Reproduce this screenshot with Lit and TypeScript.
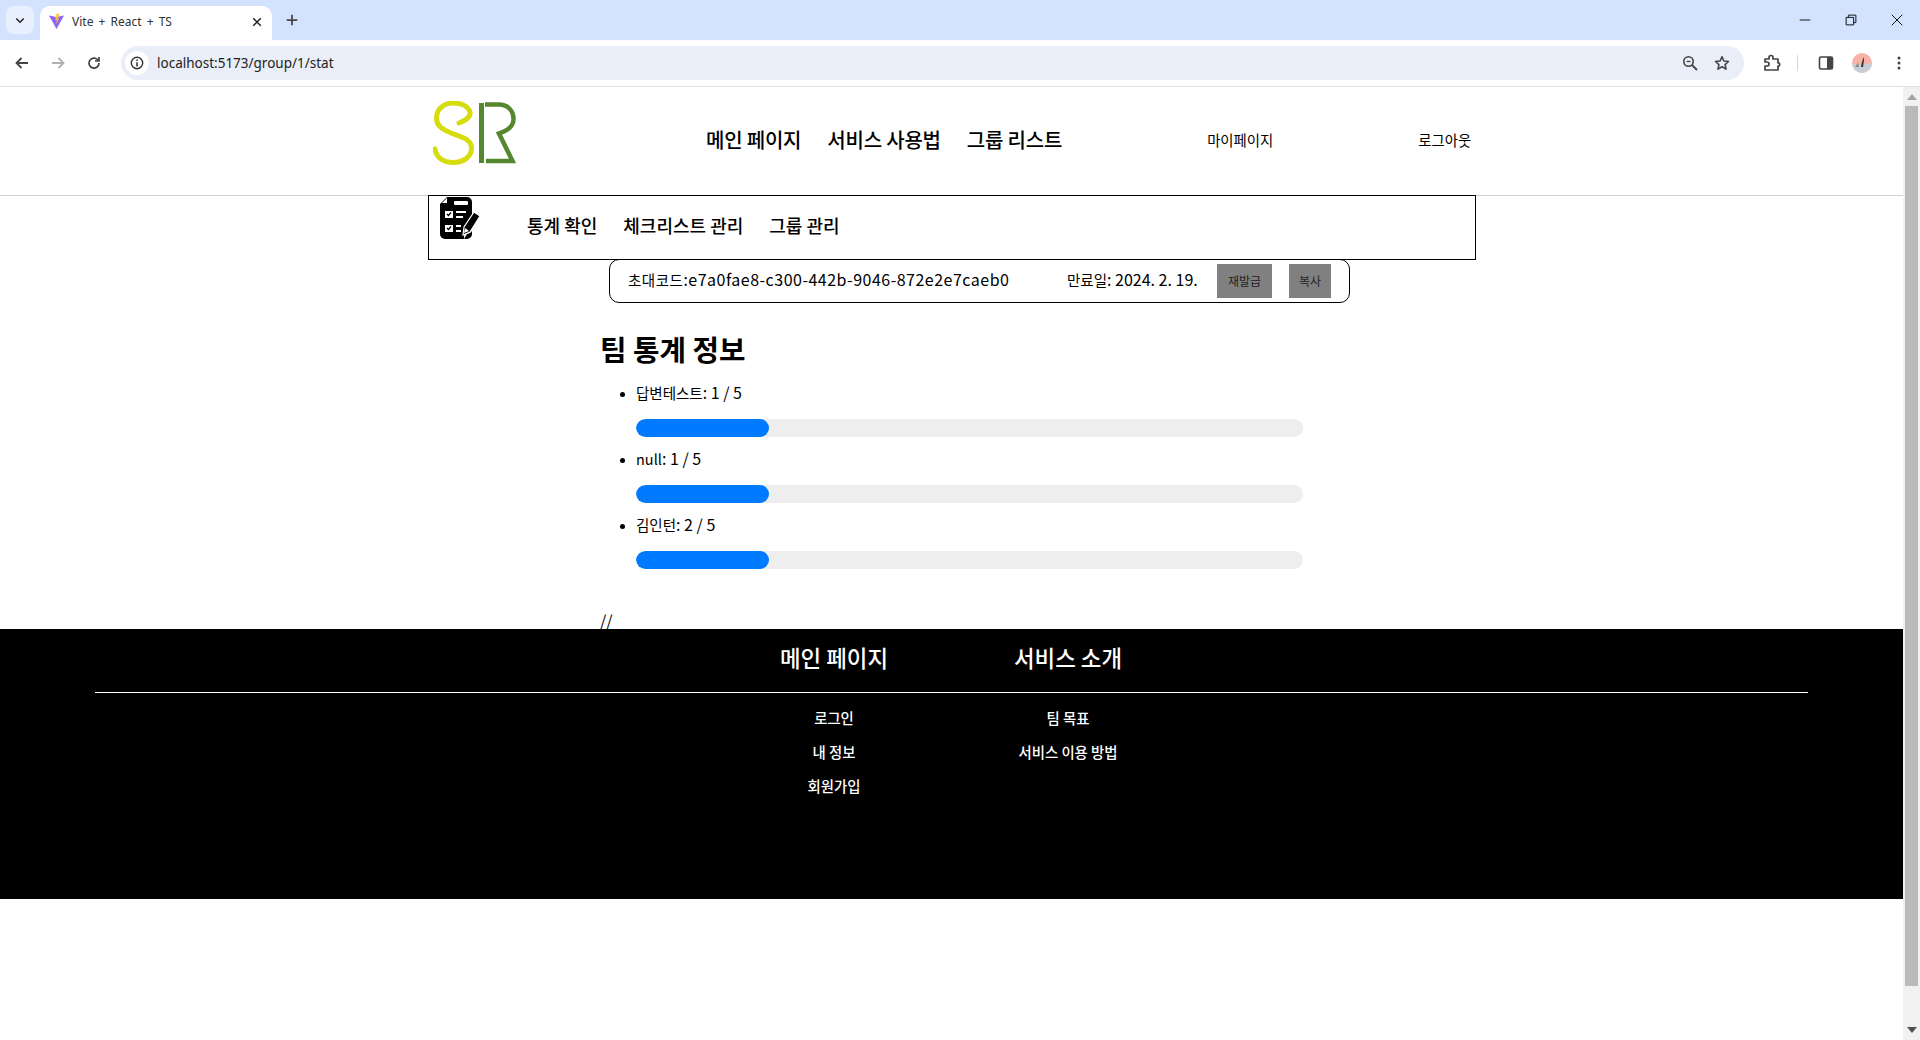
import { LitElement, html, css, svg } from "lit";
import { customElement } from "lit/decorators.js";

const ico = (w: number, h: number, body: unknown, vb = "0 0 16 16") =>
  html`<svg width=${w} height=${h} viewBox=${vb} fill="none">${body}</svg>`;

@customElement("app-root")
export class AppRoot extends LitElement {
  static styles = css`
    :host { display: block; width: 1920px; height: 1040px; overflow: hidden; background: #fff;
      font-family: "Noto Sans CJK KR", "Noto Sans", sans-serif; color: #000; }
    * { box-sizing: border-box; }
    svg { display: block; flex: none; }

    .tabstrip { height: 40px; background: #d3e3fd; display: flex; align-items: flex-end; padding-left: 6px; }
    .tabsearch { width: 28px; height: 28px; margin-bottom: 6px; border-radius: 8px; background: #e9f0fd; display: flex; align-items: center; justify-content: center; }
    .tab { margin-left: 6px; width: 232px; height: 34px; background: #fff; border-radius: 10px 10px 0 0; display: flex; align-items: center; padding: 0 9px 0 8px; font: 12px "Noto Sans", sans-serif; word-spacing: 2px; color: #333; }
    .tab .title { flex: 1; margin-left: 6px; padding-bottom: 3px; }
    .tab svg { margin-bottom: 2px; }
    .newtab { margin: 0 0 6px 6px; width: 28px; height: 28px; display: flex; align-items: center; justify-content: center; }
    .win { margin-left: auto; display: flex; height: 40px; align-items: center; }
    .win div { width: 46px; display: flex; justify-content: center; }

    .toolbar { height: 47px; background: #fff; border-bottom: 1px solid #e0e0e0; display: flex; align-items: center; padding: 0 4px 1px; }
    .nb { width: 36px; height: 34px; display: flex; align-items: center; justify-content: center; }
    .omni { width: 1623px; margin-left: 9px; height: 34px; border-radius: 17px; background: #e9eef8; display: flex; align-items: center; padding: 0 9px 0 4px; font: 13.5px "Noto Sans", sans-serif; color: #222; }
    .info { width: 24px; height: 24px; border-radius: 50%; background: #fff; display: flex; align-items: center; justify-content: center; margin-right: 8px; }
    .omni .url { flex: 1; }
    .omni .end { display: flex; gap: 16px; align-items: center; margin-right: 5px; }
    .tright { display: flex; align-items: center; margin-left: 19px; }
    .sep { width: 1px; height: 16px; background: #c7d9f7; margin: 0 20px 0 16px; }

    .viewport { height: 953px; display: flex; }
    .page { width: 1903px; height: 953px; overflow: hidden; }
    .scroll { width: 17px; background: #f1f1f1; display: flex; flex-direction: column; align-items: center; padding-top: 7px; }
    .thumb { width: 13px; height: 880px; background: #bababa; margin-top: 6px; }
    .arrow-d { margin-top: auto; margin-bottom: 7px; }

    header { height: 109px; border-bottom: 1px solid #d0d0d0; display: flex; align-items: center; padding-left: 433px; }
    .logo { margin-top: -17px; }
    .mainnav { display: flex; gap: 26px; margin-left: 189px; font-size: 20px; font-weight: 500; margin-top: -4px; letter-spacing: -0.2px; }
    .user { font-size: 14.4px; margin-top: -4px; font-weight: 400; }
    .u1 { margin-left: 145px; }
    .u2 { margin-left: 145px; }

    .sub { width: 1048px; height: 65px; margin: -1px 0 0 428px; border: 1px solid #000; display: flex; align-items: center; padding: 0 0 6px 11px; }
    .sub svg { margin-top: -14px; }
    .subnav { display: flex; gap: 26px; margin-left: 46px; font-size: 18px; font-weight: 500; }

    .invite { width: 741px; height: 44px; margin: -1px 0 0 609px; border: 1px solid #000; border-radius: 10px; display: flex; align-items: center; padding: 0 0 1px 18px; font-size: 16px; }
    .ko { font-size: 14.5px; }
    .code { width: 439px; letter-spacing: 0.5px; margin-top: -3px; }
    .exp { width: 150px; margin-top: -3px; }
    .btn { height: 34px; background: #808080; font-size: 12px; color: #222; display: flex; align-items: center; justify-content: center; }
    .b1 { width: 55px; }
    .b2 { width: 42px; margin-left: 17px; }

    .stats { margin-left: 600px; width: 680px; padding-top: 28px; }
    h2 { margin: 0; font-size: 28.8px; font-weight: 700; line-height: 36px; }
    ul { margin: 11px 0 0; padding-left: 36px; list-style: none; }
    li { height: 66px; font-size: 16px; line-height: 24px; padding-top: 2px; position: relative; }
    li::before { content: ""; position: absolute; left: -16px; top: 14px; width: 5px; height: 5px; border-radius: 50%; background: #000; }
    .track { width: 667px; height: 18px; border-radius: 9px; background: #eee; margin-top: 14px; overflow: hidden; }
    .fill { height: 18px; border-radius: 9px; background: #007bff; }
    .slash { height: 21px; margin-top: 32px; font-size: 16px; line-height: 24px; }

    footer { height: 270px; background: #000; color: #fff; padding-top: 10px; }
    .fhead { display: flex; height: 54px; margin: 0 95px; border-bottom: 1px solid #fff; }
    .col { width: 234px; text-align: center; }
    .c1 { margin-left: 622px; }
    .fhead .col { font-size: 22.4px; font-weight: 500; line-height: 37px; }
    .fbody { display: flex; margin: 0 95px; padding-top: 8px; }
    .fbody .col { font-size: 14.4px; font-weight: 500; line-height: 34px; }
  `;

  render() {
    const rows = [["답변테스트", "1 / 5"], ["null", "1 / 5"], ["김인턴", "2 / 5"]];
    return html`
      <div class="tabstrip">
        <div class="tabsearch">${ico(12, 12, svg`<path d="M3 6l5 5 5-5" stroke="#222" stroke-width="2"/>`)}</div>
        <div class="tab">
          ${ico(18, 18, svg`<path d="M1 2.5l7.5 13.5 7.5-13.5-4 .7-3.5 1-3.5-1z" fill="#8c65f5"/><path d="M8.5 1l3-.5-1.8 5 1.5-.5-3 6 .6-4.5-1.6.4z" fill="#ffc517"/>`, "0 0 18 18")}
          <span class="title">Vite + React + TS</span>
          ${ico(12, 12, svg`<path d="M3 3l10 10M13 3L3 13" stroke="#222" stroke-width="2"/>`)}
        </div>
        <div class="newtab">${ico(14, 14, svg`<path d="M8 2v12M2 8h12" stroke="#444" stroke-width="2"/>`)}</div>
        <div class="win">
          <div>${ico(12, 12, svg`<path d="M1 8h14" stroke="#111" stroke-width="1.3"/>`)}</div>
          <div>${ico(12, 12, svg`<path d="M1.5 4.5h10v10h-10zM4.5 4.5v-3h10v10h-3" stroke="#111" stroke-width="1.3"/>`)}</div>
          <div>${ico(12, 12, svg`<path d="M1 1l14 14M15 1L1 15" stroke="#111" stroke-width="1.3"/>`)}</div>
        </div>
      </div>
      <div class="toolbar">
        <div class="nb">${ico(16, 16, svg`<path d="M14 8H3M7.5 3L2.5 8l5 5" stroke="#444" stroke-width="1.8"/>`)}</div>
        <div class="nb">${ico(16, 16, svg`<path d="M2 8h11M8.5 3l5 5-5 5" stroke="#b0b0b0" stroke-width="1.8"/>`)}</div>
        <div class="nb">${ico(16, 16, svg`<path d="M13 8a5 5 0 1 1-1.5-3.5L13 6M13 2v4H9" stroke="#444" stroke-width="1.7"/>`)}</div>
        <div class="omni">
          <div class="info">${ico(14, 14, svg`<circle cx="8" cy="8" r="6.5" stroke="#333" stroke-width="1.6"/><path d="M8 7v5M8 4v1.8" stroke="#333" stroke-width="1.8"/>`)}</div>
          <span class="url">localhost:5173/group/1/stat</span>
          <div class="end">
            ${ico(16, 16, svg`<circle cx="6.5" cy="6.5" r="4.7" stroke="#444" stroke-width="1.6"/><path d="M10 10l5 5" stroke="#444" stroke-width="1.8"/><path d="M4.5 6.5h4" stroke="#444" stroke-width="1.3"/>`)}
            ${ico(16, 16, svg`<path d="M8 1.8l1.9 4.2 4.6.5-3.4 3.1.9 4.5-4-2.3-4 2.3.9-4.5-3.4-3.1 4.6-.5z" stroke="#444" stroke-width="1.6" stroke-linejoin="round"/>`)}
          </div>
        </div>
        <div class="tright">
          ${ico(18, 18, svg`<path d="M2 5h4V3.5a2 2 0 0 1 4 0V5h5v4h1a2 2 0 0 1 0 3h-1v4H2v-4h2a2 2 0 0 0 0-4H2z" stroke="#444" stroke-width="1.7" stroke-linejoin="round"/>`, "0 0 18 18")}
          <div class="sep"></div>
          ${ico(16, 16, svg`<rect x="1.5" y="2" width="13" height="12" rx="1.5" stroke="#444" stroke-width="1.6"/><path d="M9 2h5.5v12H9z" fill="#444"/>`)}
          <div style="width:18px"></div>
          ${ico(20, 20, svg`<circle cx="10" cy="10" r="10" fill="#f7b3a6"/><path d="M0 10l9 2 11-2a10 10 0 0 1-20 0z" fill="#c8ced8"/><path d="M12 4c-1.500 2-2 5-3 10l2 0c.5-3 1-6 1-10z" fill="#333"/><path d="M6 10l-3 4 4 0z" fill="#888"/>`, "0 0 20 20")}
          <div style="width:19px"></div>
          ${ico(16, 16, svg`<circle cx="8" cy="3" r="1.5" fill="#444"/><circle cx="8" cy="8" r="1.5" fill="#444"/><circle cx="8" cy="13" r="1.5" fill="#444"/>`)}
        </div>
      </div>
      <div class="viewport">
        <div class="page">
          <header>
            <svg class="logo" width="84" height="64" viewBox="0 0 84 64" fill="none">
              <path d="M26 22C33 19 38 16 37 11 35 5 28 2 20 2 10 2 3 9 3.500 18 4 25 9 28 18 32c10 4 20.500 6 20.500 15 0 9-8.500 14.500-18.500 14.500C10 61.500 3 56 2 48" stroke="#d7dc0f" stroke-width="5" stroke-linecap="round"/>
              <path d="M48.500 2v60" stroke="#55872f" stroke-width="5"/>
              <path d="M52 3.500H66C75 3.500 80.500 10 80.500 18 80.500 26 74 30 66 32.500L79.500 60H53" stroke="#55872f" stroke-width="4.500"/>
            </svg>
            <nav class="mainnav"><span>메인 페이지</span><span>서비스 사용법</span><span>그룹 리스트</span></nav>
            <span class="user u1">마이페이지</span>
            <span class="user u2">로그아웃</span>
          </header>
          <div class="sub">
            <svg width="41" height="42" viewBox="0 0 41 42" fill="none">
              <path d="M7 0h20a5 5 0 0 1 5 5v13l-8 13v11H5a5 5 0 0 1-5-5V7z" fill="#000"/>
              <path d="M27 37l3-1 2-2v3a5 5 0 0 1-5 5h-3z" fill="#000"/>
              <path d="M2 6l5-5v5z" fill="#fff"/>
              <rect x="14" y="4" width="14" height="4" rx="1" fill="#fff"/>
              <rect x="5" y="14" width="8" height="7" fill="#fff"/><rect x="5" y="28" width="8" height="7" fill="#fff"/>
              <path d="M7 17l1.500 1.500 2.500-3M7 31l1.500 1.500 2.500-3" stroke="#000" stroke-width="1.200"/>
              <path d="M16 15h10M16 20h7M16 29h5M16 34h5" stroke="#fff" stroke-width="1.800"/>
              <path d="M34 15l6 4-10 16-7 3 1-8z" fill="#000" stroke="#fff" stroke-width="1.200"/>
              <path d="M25 31l4 3-5 2z" fill="#fff"/>
            </svg>
            <nav class="subnav"><span>통계 확인</span><span>체크리스트 관리</span><span>그룹 관리</span></nav>
          </div>
          <div class="invite">
            <span class="code"><span class="ko">초대코드</span>:e7a0fae8-c300-442b-9046-872e2e7caeb0</span>
            <span class="exp"><span class="ko">만료일</span>: 2024. 2. 19.</span>
            <div class="btn b1">재발급</div>
            <div class="btn b2">복사</div>
          </div>
          <section class="stats">
            <h2>팀 통계 정보</h2>
            <ul>
              ${rows.map(([n, v]) => html`<li><span class="ko">${n}</span>: ${v}<div class="track"><div class="fill" style="width:20%"></div></div></li>`)}
            </ul>
            <div class="slash">//</div>
          </section>
          <footer>
            <div class="fhead"><div class="col c1">메인 페이지</div><div class="col">서비스 소개</div></div>
            <div class="fbody">
              <div class="col c1"><div>로그인</div><div>내 정보</div><div>회원가입</div></div>
              <div class="col"><div>팀 목표</div><div>서비스 이용 방법</div></div>
            </div>
          </footer>
        </div>
        <div class="scroll">
          <svg width="10" height="6" viewBox="0 0 10 6"><path d="M5 0l5 6H0z" fill="#a3a3a3"/></svg>
          <div class="thumb"></div>
          <svg class="arrow-d" width="10" height="6" viewBox="0 0 10 6"><path d="M5 6l5-6H0z" fill="#505050"/></svg>
        </div>
      </div>
    `;
  }
}
